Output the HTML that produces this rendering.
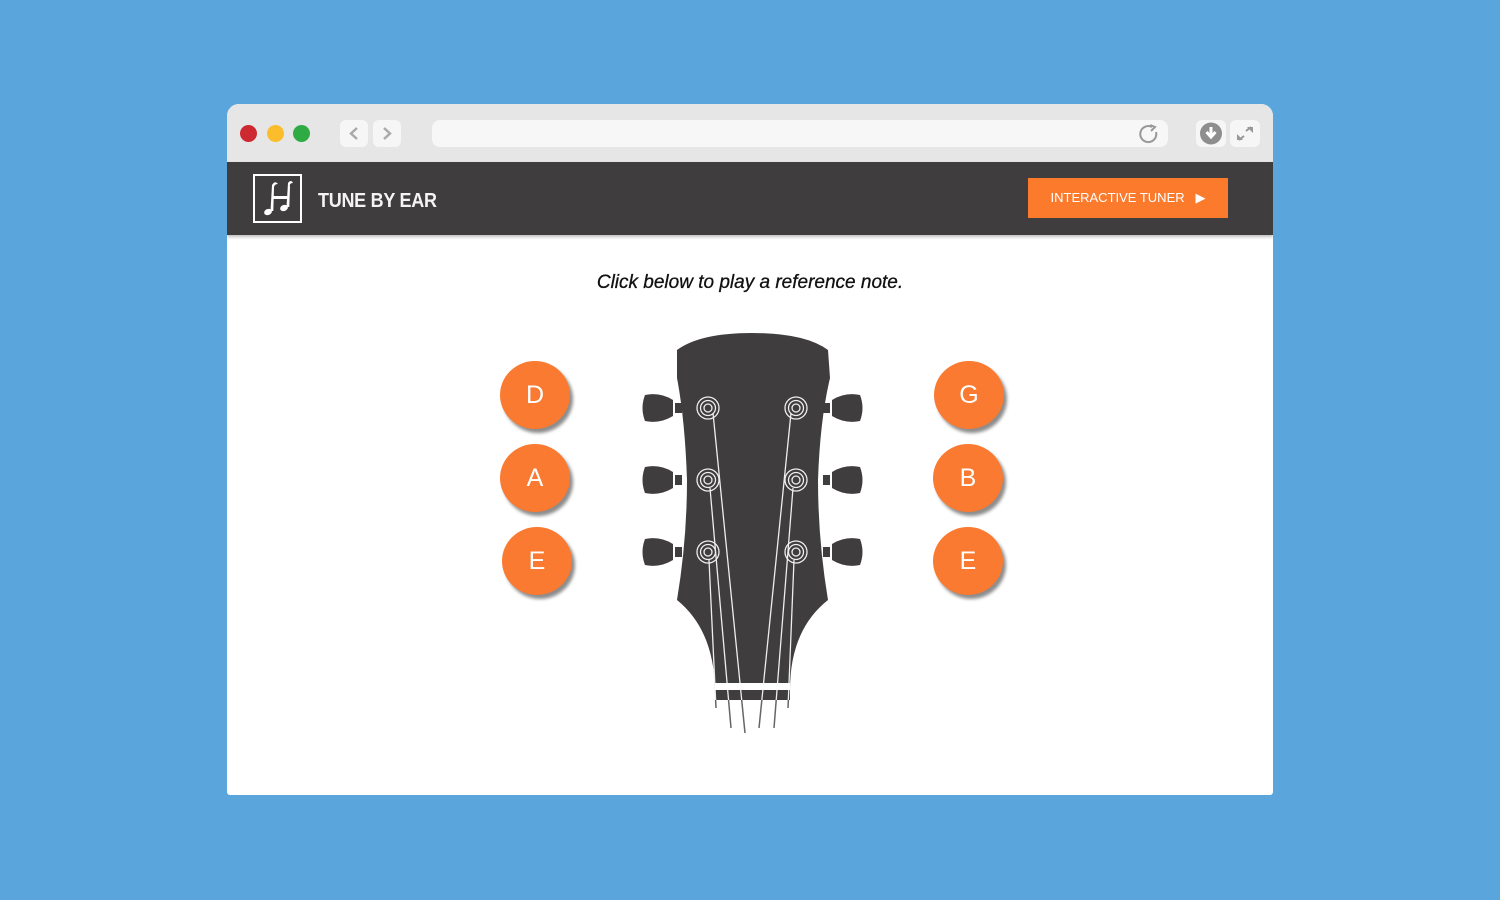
<!DOCTYPE html>
<html><head><style>
body{margin:0;width:1500px;height:900px;background:#5aa5dc;font-family:"Liberation Sans",sans-serif;position:relative;overflow:hidden}
.win{position:absolute;left:227px;top:104px;width:1046px;height:691px;background:#fff;border-radius:12px 12px 3px 3px;overflow:hidden}
.tb{position:absolute;left:0;top:0;width:100%;height:58px;background:#e6e6e6}
.dot{position:absolute;top:21px;width:17px;height:17px;border-radius:50%}
.nb{position:absolute;top:16px;width:28px;height:27px;background:#f6f6f6;border-radius:6px}
.url{position:absolute;left:205px;top:16px;width:736px;height:27px;background:#f7f7f7;border-radius:8px}
.hd{position:absolute;left:0;top:58px;width:100%;height:73px;background:#3f3d3e;box-shadow:0 2px 3px rgba(0,0,0,.25)}
.logo{position:absolute;left:26px;top:12px;width:45px;height:45px;border:2px solid #fff}
.title{position:absolute;left:91px;top:28px;color:#f4f4f4;font-weight:bold;font-size:20px;letter-spacing:-.3px;transform:scaleX(.9);transform-origin:left}
.btn{position:absolute;left:801px;top:16px;width:200px;height:40px;background:#fc7a2c;color:#fff;font-size:13px;line-height:40px;text-align:center}
.cap{position:absolute;left:0;width:100%;top:168px;text-align:center;font-style:italic;font-size:19px;color:#111;-webkit-text-stroke:.3px #111}
.n{position:absolute;width:70px;height:68px;border-radius:50%;background:#f97a30;color:#fff;font-size:25px;line-height:68px;text-align:center;box-shadow:3px 4px 3px rgba(0,0,0,.45)}
</style></head><body>
<div class="win">
<div class="tb">
<div class="dot" style="left:13px;background:#cc2a30"></div>
<div class="dot" style="left:40px;background:#fbbd2c"></div>
<div class="dot" style="left:66px;background:#2fab44"></div>
<div class="nb" style="left:113px"><svg width="28" height="27"><path d="M17 8 L11 13.5 L17 19" stroke="#aaa" stroke-width="2.5" fill="none"/></svg></div>
<div class="nb" style="left:146px"><svg width="28" height="27"><path d="M11 8 L17 13.5 L11 19" stroke="#aaa" stroke-width="2.5" fill="none"/></svg></div>
<div class="url"><svg style="position:absolute;right:8px;top:3px" width="22" height="22"><path d="M14 4 A8 8 0 1 0 18 9" stroke="#999" stroke-width="2" fill="none"/><path d="M12 2 L17 4 L13 8" stroke="#999" stroke-width="2" fill="none"/></svg></div>
<div class="nb" style="left:969px;width:30px"><svg width="30" height="27"><circle cx="15" cy="13.5" r="11" fill="#8e8e8e"/><path d="M15 7 V16 M10.5 12 L15 17 L19.5 12" stroke="#fff" stroke-width="3" fill="none"/></svg></div>
<div class="nb" style="left:1003px;width:30px"><svg width="30" height="27"><path d="M17 7 H23 V13 Z M13 20 H7 V14 Z" fill="#999"/><path d="M16 11 L21 7 M14 16 L9 20" stroke="#999" stroke-width="2"/></svg></div>
</div>
<div class="hd">
<div class="logo"><svg width="45" height="45"><g fill="#fff"><ellipse cx="13" cy="36" rx="4" ry="3" transform="rotate(-20 13 36)"/><ellipse cx="29" cy="32" rx="4" ry="3" transform="rotate(-20 29 32)"/><path d="M15.5 35 L17 9 Q20 4 23 8 Q19 8 19 12 L18.3 35 Z"/><path d="M31.5 31 L33 7 Q36 3 38 7 Q34 7 35 11 L34.3 31 Z"/><rect x="17" y="20" width="17" height="3"/></g></svg></div>
<div class="title">TUNE BY EAR</div>
<div class="btn">INTERACTIVE TUNER &nbsp;&nbsp;▶</div>
</div>
<div class="cap">Click below to play a reference note.</div>
</div>
<div class="n" style="left:500px;top:361px">D</div>
<div class="n" style="left:500px;top:444px">A</div>
<div class="n" style="left:502px;top:527px">E</div>
<div class="n" style="left:934px;top:361px">G</div>
<div class="n" style="left:933px;top:444px">B</div>
<div class="n" style="left:933px;top:527px">E</div>
<svg style="position:absolute;left:0;top:0" width="1500" height="900">
<defs><clipPath id="up"><rect x="0" y="0" width="1500" height="700"/></clipPath><clipPath id="dn"><rect x="0" y="700" width="1500" height="100"/></clipPath></defs>
<g fill="#3f3d3e">
<path d="M677 350 Q700 333 752 333 Q805 333 828 350 L830 378 Q820 420 818 480 Q818 540 828 600 Q790 630 790 690 L715 690 Q714 630 677 600 Q687 540 687 480 Q685 420 677 378 Z"/>
<g id="tl"><path d="M645 395 Q660 392 673 400 L673 416 Q660 424 645 421 Q640 408 645 395Z"/><rect x="675" y="403" width="7" height="10"/></g>
<use href="#tl" y="72"/><use href="#tl" y="144"/>
<g id="tr"><path d="M860 395 Q845 392 832 400 L832 416 Q845 424 860 421 Q865 408 860 395Z"/><rect x="823" y="403" width="7" height="10"/></g>
<use href="#tr" y="72"/><use href="#tr" y="144"/>
<rect x="715" y="690" width="75" height="10"/>
</g>
<g fill="none" stroke="#eee" stroke-width="1.3">
<g id="pg"><circle cx="708" cy="408" r="11"/><circle cx="708" cy="408" r="7.5"/><circle cx="708" cy="408" r="4"/></g>
<use href="#pg" y="72"/><use href="#pg" y="144"/><use href="#pg" x="88"/><use href="#pg" x="88" y="72"/><use href="#pg" x="88" y="144"/>
<path id="st" clip-path="url(#up)" d="M713 413 L745 733 M710 488 L731 728 M709 560 L716 708 M791 413 L759 728 M793 488 L774 728 M794 560 L788 708"/>
</g>
<path clip-path="url(#dn)" fill="none" stroke="#666" stroke-width="1.5" d="M713 413 L745 733 M710 488 L731 728 M709 560 L716 708 M791 413 L759 728 M793 488 L774 728 M794 560 L788 708"/>
<rect x="715" y="683" width="75" height="7" fill="#fff"/>
</svg>
</body></html>
